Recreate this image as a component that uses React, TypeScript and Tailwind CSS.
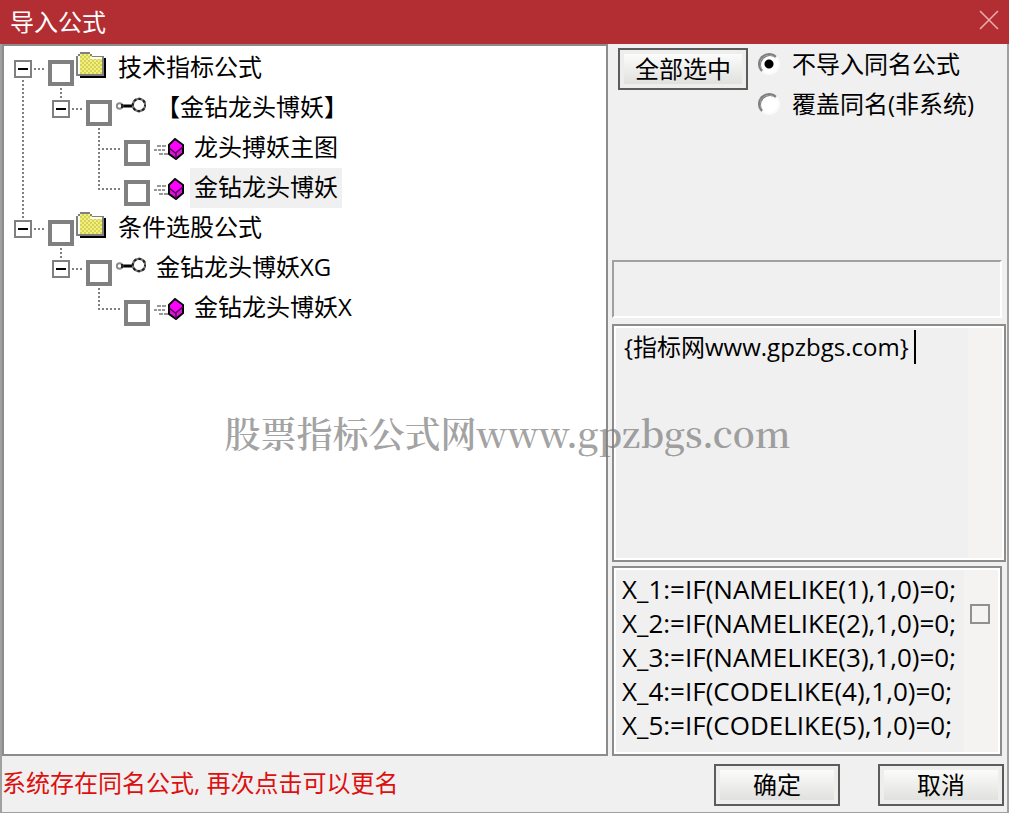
import React, { useState } from "react";

type Guide = "none" | "line" | "tee" | "elbow" | "rootFirst" | "rootLast" | "branch";
type IconKind = "folder" | "key" | "cube";

interface Node {
  id: string;
  label: string;
  icon: IconKind;
  guides: Guide[];
  selected?: boolean;
}

const nodes: Node[] = [
  { id: "n1", label: "技术指标公式", icon: "folder", guides: ["rootFirst"] },
  { id: "n2", label: "【金钻龙头博妖】", icon: "key", guides: ["line", "branch"] },
  { id: "n3", label: "龙头搏妖主图", icon: "cube", guides: ["line", "none", "tee"] },
  { id: "n4", label: "金钻龙头博妖", icon: "cube", guides: ["line", "none", "elbow"], selected: true },
  { id: "n5", label: "条件选股公式", icon: "folder", guides: ["rootLast"] },
  { id: "n6", label: "金钻龙头博妖XG", icon: "key", guides: ["none", "branch"] },
  { id: "n7", label: "金钻龙头博妖X", icon: "cube", guides: ["none", "none", "elbow"] },
];

const code = `X_1:=IF(NAMELIKE(1),1,0)=0;
X_2:=IF(NAMELIKE(2),1,0)=0;
X_3:=IF(NAMELIKE(3),1,0)=0;
X_4:=IF(CODELIKE(4),1,0)=0;
X_5:=IF(CODELIKE(5),1,0)=0;`;

function GuideCell({ kind }: { kind: Guide }) {
  const hasBox = kind === "rootFirst" || kind === "rootLast" || kind === "branch";
  return (
    <svg
      className="h-10 w-[38px] shrink-0 overflow-visible"
      viewBox="0 0 38 40"
      shapeRendering="crispEdges"
      fill="none"
      stroke="#808080"
      strokeWidth="2"
      aria-hidden="true"
    >
      <g strokeDasharray="2 2">
        {(kind === "line" || kind === "tee") && <path d="M19 0V40" />}
        {kind === "elbow" && <path d="M19 0V22" />}
        {(kind === "tee" || kind === "elbow") && <path d="M18 21H40" />}
        {(kind === "branch" || kind === "rootLast") && <path d="M19 0V10" />}
        {kind === "rootFirst" && <path d="M19 32V40" />}
        {hasBox && <path d="M30 21H40" />}
      </g>
      {hasBox && (
        <>
          <rect x="11" y="13" width="16" height="16" fill="#fff" />
          <path d="M14 21H24" stroke="#000" />
        </>
      )}
    </svg>
  );
}

function FolderIcon() {
  return (
    <svg className="mt-1 mr-[2px] h-[26px] w-[30px] shrink-0" viewBox="0 0 30 26" shapeRendering="crispEdges" aria-hidden="true">
      <defs>
        <pattern id="dither" width="4" height="4" patternUnits="userSpaceOnUse">
          <rect width="4" height="4" fill="#f0f07c" />
          <rect width="2" height="2" fill="#d6d258" />
          <rect x="2" y="2" width="2" height="2" fill="#d6d258" />
        </pattern>
      </defs>
      <path d="M4 24H28V6H30V26H4Z" fill="#000" />
      <path d="M0 4H2V2H4V0H14V2H16V4H28V24H0Z" fill="#808080" />
      <path d="M2 4H4V2H14V4H16V6H26V22H2Z" fill="url(#dither)" />
      <path d="M2 4H4V22H2ZM14 5H26V7H14Z" fill="#fffff0" />
    </svg>
  );
}

function KeyIcon() {
  return (
    <svg className="mt-2 ml-[2px] h-5 w-[30px] shrink-0" viewBox="0 0 30 20" fill="none" aria-hidden="true">
      <path d="M6 10H17" stroke="#000" strokeWidth="3" />
      <circle cx="3.6" cy="10" r="2.8" fill="#fff" stroke="#8a8a8a" strokeWidth="2" />
      <path d="M6 8V12" stroke="#222" strokeWidth="2" />
      <circle cx="23" cy="9" r="6.2" fill="#fff" stroke="#777" strokeWidth="2.2" />
      <circle cx="23" cy="9" r="6.2" stroke="#222" strokeWidth="2.2" strokeDasharray="2.6 2.27" strokeDashoffset="1.3" />
    </svg>
  );
}

function CubeIcon() {
  return (
    <svg className="mt-[10px] ml-[2px] h-[22px] w-[30px] shrink-0" viewBox="0 0 30 22" aria-hidden="true">
      <g shapeRendering="crispEdges" stroke="#999" strokeWidth="2">
        <path d="M3 8H13" strokeDasharray="4 1" />
        <path d="M0 12H12" strokeDasharray="3 1" />
        <path d="M5 16H14" strokeDasharray="4 1" />
      </g>
      <path d="M21 1L29 7V15L22 21L15 16V7Z" fill="#e010e0" stroke="#000" strokeWidth="2" />
      <path d="M21 2.4L28 7.6L22 14L16 7.6Z" fill="#ff00ff" />
      <path d="M15 10L21.5 15L29 9M22 15V21" fill="none" stroke="#500050" strokeWidth="1.5" />
    </svg>
  );
}

function NodeIcon({ kind }: { kind: IconKind }) {
  if (kind === "folder") return <FolderIcon />;
  if (kind === "key") return <KeyIcon />;
  return <CubeIcon />;
}

function PushButton({ children, className = "" }: { children: React.ReactNode; className?: string }) {
  return (
    <button
      type="button"
      className={`h-[42px] border-2 border-[#5c5c5c] bg-linear-to-b from-white to-[#dddddb] leading-[34px] shadow-[inset_0_0_0_4px_#eeeeec] ${className}`}
    >
      {children}
    </button>
  );
}

const radioClass =
  "size-[22px] shrink-0 appearance-none rounded-full border-2 border-t-[#808080] border-l-[#808080] border-r-[#fafafa] border-b-[#fafafa] bg-white shadow-[inset_1px_1px_0_#808080] checked:bg-[radial-gradient(circle,#000_4px,#fff_5px)]";

export default function App() {
  const [mode, setMode] = useState("skip");
  const [comment, setComment] = useState("{指标网www.gpzbgs.com}");

  return (
    <div className="relative flex min-h-screen flex-col bg-[#f0f0f0] font-['Open_Sans','Noto_Sans_CJK_SC',sans-serif] text-2xl text-black">
      <header className="flex h-11 items-center justify-between bg-[#b22e32] px-[10px]">
        <h1 className="leading-[40px] text-white">导入公式</h1>
        <button type="button" aria-label="关闭" className="mb-1 size-5">
          <svg viewBox="0 0 20 20" className="size-5" fill="none" stroke="#efaaaa" strokeWidth="1.6" aria-hidden="true">
            <path d="M1 1L19 19M19 1L1 19" />
          </svg>
        </button>
      </header>

      <div className="flex flex-1 flex-col border-x-2 border-b border-[#a0a0a0]">
        <main className="flex flex-1">
          <ul className="min-w-0 flex-1 border-2 border-[#8c8c8c] bg-white pt-[2px]">
            {nodes.map((node) => (
              <li key={node.id} className="flex h-10">
                {node.guides.map((g, i) => (
                  <GuideCell key={i} kind={g} />
                ))}
                <input
                  id={node.id}
                  type="checkbox"
                  className="mt-3 mr-[2px] ml-[6px] size-[26px] shrink-0 appearance-none border-4 border-[#808080] bg-white"
                />
                <NodeIcon kind={node.icon} />
                <label
                  htmlFor={node.id}
                  className={`ml-[6px] h-10 px-1 leading-[38px] whitespace-nowrap ${node.selected ? "bg-[#f0f0f0]" : ""}`}
                >
                  {node.label}
                </label>
              </li>
            ))}
          </ul>

          <section className="flex w-[399px] shrink-0 flex-col pr-px pl-1">
            <div className="flex flex-1 items-start pt-1 pl-[6px]">
              <PushButton className="w-[130px]">全部选中</PushButton>
              <fieldset className="ml-[10px] -mt-1">
                {[
                  { value: "skip", label: "不导入同名公式" },
                  { value: "over", label: "覆盖同名(非系统)" },
                ].map((o) => (
                  <label key={o.value} className="flex h-10 items-center gap-3 leading-10 whitespace-nowrap">
                    <input
                      type="radio"
                      name="mode"
                      value={o.value}
                      checked={mode === o.value}
                      onChange={() => setMode(o.value)}
                      className={radioClass}
                    />
                    {o.label}
                  </label>
                ))}
              </fieldset>
            </div>

            <div className="mr-1 h-[58px] border-2 border-t-[#a0a0a0] border-r-white border-b-white border-l-[#a0a0a0]" />

            <div className="relative mt-[6px] flex h-[238px] border-2 border-[#8c8c8c] bg-white p-[2px]">
              <textarea
                aria-label="公式说明"
                value={comment}
                onChange={(e) => setComment(e.target.value)}
                className="min-w-0 flex-1 resize-none overflow-hidden bg-[#f0f0f0] px-2 pt-[2px] leading-[34px] whitespace-nowrap outline-none"
              />
              <div className="w-[34px] bg-[#f4f3f1]" />
              <span className="absolute top-1 left-[300px] h-[34px] w-[2px] bg-black" />
            </div>

            <div className="mt-1 mr-1 flex h-[190px] border-2 border-[#8c8c8c] bg-white p-[2px]">
              <textarea
                aria-label="公式源码"
                readOnly
                value={code}
                className="min-w-0 flex-1 resize-none overflow-hidden bg-[#f0f0f0] pt-[2px] pl-[6px] text-[26px] leading-[34px] whitespace-pre outline-none"
              />
              <div className="w-[34px] bg-[#f4f3f1] pt-[34px] pl-[6px]">
                <input
                  type="checkbox"
                  aria-label="显示源码"
                  className="block size-5 appearance-none border-2 border-[#909090]"
                />
              </div>
            </div>
          </section>
        </main>

        <footer className="flex h-14 items-start justify-between pt-2 pr-[3px]">
          <p className="leading-[38px] text-[#dd0f0f]">系统存在同名公式, 再次点击可以更名</p>
          <div className="flex gap-[38px]">
            <PushButton className="w-[126px]">确定</PushButton>
            <PushButton className="w-[126px]">取消</PushButton>
          </div>
        </footer>
      </div>

      <div className="pointer-events-none absolute inset-x-0 top-[403px] pl-[6px] text-center font-['Noto_Serif_CJK_SC',serif] text-4xl leading-[60px] font-semibold whitespace-nowrap text-[#7a7a7a]/70">
        股票指标公式网www.gpzbgs.com
      </div>
    </div>
  );
}
